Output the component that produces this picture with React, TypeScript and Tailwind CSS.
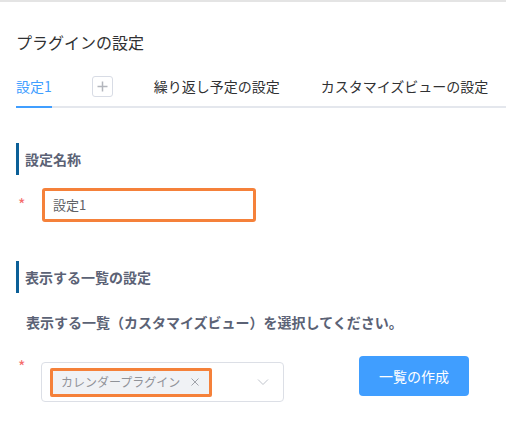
import React from 'react';

const font = { fontFamily: '"Noto Sans CJK JP", "Noto Sans", sans-serif' };

const SectionTitle: React.FC<{ label: string }> = ({ label }) => (
  <div className="flex items-center h-[32px] border-l-[3px] border-[#0b5f97] pl-[6px]">
    <span className="text-[14px] font-bold text-[#5b6275] leading-none">{label}</span>
  </div>
);

export default function App() {
  return (
    <div style={font} className="w-[506px] h-[427px] bg-white border-t-2 border-[#e4e4e4] pl-4 overflow-hidden">
      <h1 className="pt-[28px] text-[16px] leading-[24px] text-[#303133]">プラグインの設定</h1>

      {/* tabs */}
      <div className="mt-[13px] flex items-center h-[41px] border-b-2 border-[#e4e7ed] text-[14px]">
        <div className="relative h-full flex items-center text-[#409eff]">
          設定1
          <div className="absolute left-0 right-0 -bottom-[2px] h-[2px] bg-[#409eff]" />
        </div>
        <button
          type="button"
          className="ml-[40px] w-[21px] h-[21px] flex items-center justify-center border border-[#d8dce5] rounded-[3px] text-[#b3b6bd]"
        >
          <svg width="11" height="11" viewBox="0 0 11 11" fill="none" stroke="currentColor" strokeWidth="1.5">
            <path d="M5.5 0.5v10M0.5 5.5h10" />
          </svg>
        </button>
        <div className="ml-[41px] text-[#303133]">繰り返し予定の設定</div>
        <div className="ml-[41px] text-[#303133] whitespace-nowrap">カスタマイズビューの設定</div>
      </div>

      {/* setting name */}
      <div className="mt-[35px]">
        <SectionTitle label="設定名称" />
      </div>
      <div className="mt-[13px] flex items-start">
        <span className="w-[26px] pl-[2px] pt-[8px] text-[#f56c6c] text-[16px] leading-none">*</span>
        <div className="w-[214px] h-[34px] border-[3px] border-[#f5813a] rounded-[3px] flex items-center pl-[8px] text-[13px] text-[#606266]">
          設定1
        </div>
      </div>

      {/* list setting */}
      <div className="mt-[39px]">
        <SectionTitle label="表示する一覧の設定" />
      </div>
      <p className="mt-[21px] pl-[10px] text-[14px] leading-[16px] text-[#5b6275] font-semibold">
        表示する一覧（カスタマイズビュー）を選択してください。
      </p>
      <div className="mt-[26px] flex items-start">
        <span className="w-[25px] pl-[2px] pt-[2px] text-[#f56c6c] text-[16px] leading-none">*</span>
        <div className="mt-[6px] w-[243px] h-[40px] border border-[#dcdfe6] rounded-[4px] flex items-center pl-[8px] pr-[14px]">
          <div className="shrink-0 whitespace-nowrap h-[29px] w-[162px] border-[3px] border-[#f5813a] rounded-[2px] bg-[#f0f2f5] flex items-center pl-[8px] text-[12px] text-[#909399]">
            カレンダープラグイン
            <svg className="ml-[11px]" width="8" height="8" viewBox="0 0 8 8" fill="none" stroke="#a0a3aa" strokeWidth="1">
              <path d="M0.5 0.5l7 7M7.5 0.5l-7 7" />
            </svg>
          </div>
          <svg className="ml-auto" width="12" height="8" viewBox="0 0 12 8" fill="none" stroke="#c0c4cc" strokeWidth="1">
            <path d="M1 1.5l5 5 5-5" />
          </svg>
        </div>
        <button
          type="button"
          className="ml-[75px] w-[110px] h-[40px] rounded-[4px] bg-[#409eff] text-white text-[14px]"
        >
          一覧の作成
        </button>
      </div>
    </div>
  );
}
